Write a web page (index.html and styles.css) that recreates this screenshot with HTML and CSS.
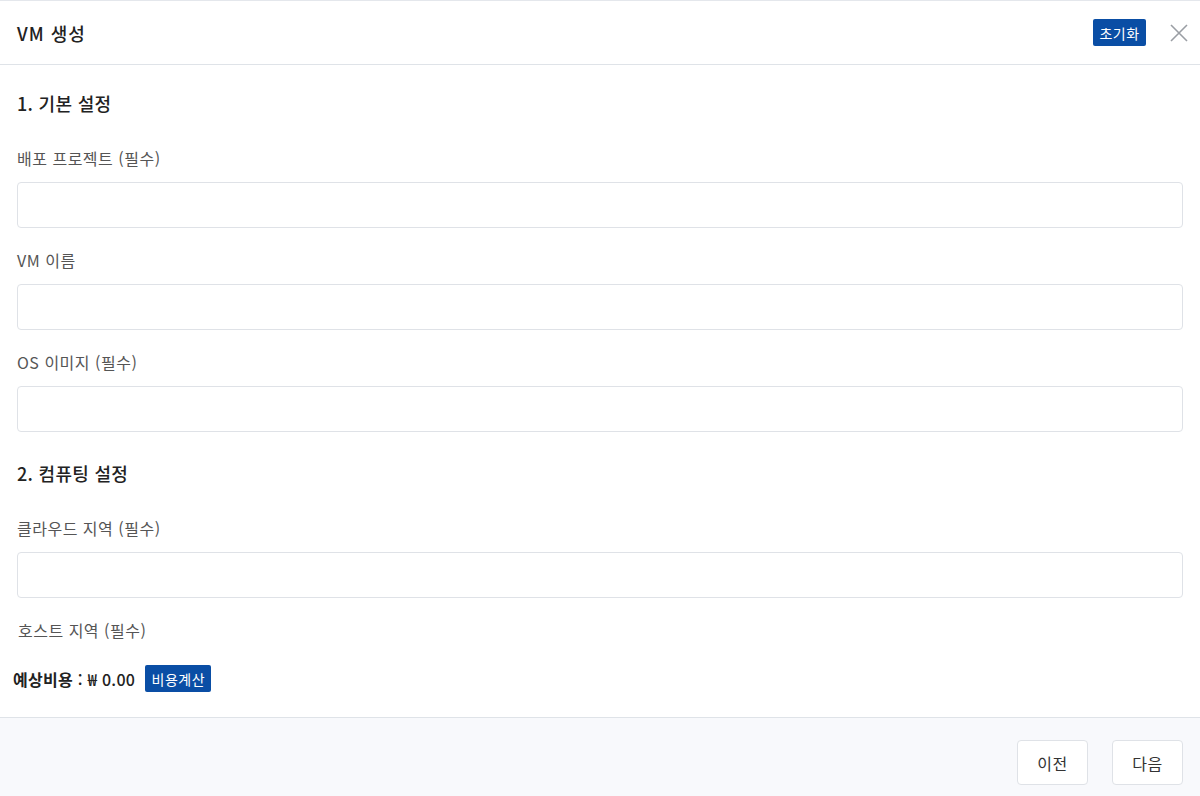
FILE: index.html
```html
<!DOCTYPE html>
<html lang="ko">
<head>
<meta charset="utf-8">
<title>VM 생성</title>
<link rel="stylesheet" href="styles.css">
</head>
<body>
<div class="modal">
  <div class="modal-header">
    <h1 class="modal-title">VM 생성</h1>
    <div class="header-actions">
      <button class="btn-primary btn-reset">초기화</button>
      <button class="btn-close" aria-label="닫기">
        <svg width="18" height="18" viewBox="0 0 18 18"><path d="M1 1 L17 17 M17 1 L1 17" stroke="#9a9ea4" stroke-width="1.6" fill="none"/></svg>
      </button>
    </div>
  </div>
  <div class="modal-body">
    <h2 class="section-title">1. 기본 설정</h2>
    <div class="field">
      <label class="field-label">배포 프로젝트 (필수)</label>
      <div class="field-input"></div>
    </div>
    <div class="field">
      <label class="field-label">VM 이름</label>
      <div class="field-input"></div>
    </div>
    <div class="field">
      <label class="field-label">OS 이미지 (필수)</label>
      <div class="field-input"></div>
    </div>
    <h2 class="section-title second">2. 컴퓨팅 설정</h2>
    <div class="field">
      <label class="field-label">클라우드 지역 (필수)</label>
      <div class="field-input"></div>
    </div>
    <div class="field">
      <label class="field-label host">호스트 지역 (필수)</label>
    </div>
    <div class="cost-row">
      <span class="cost-text"><strong>예상비용</strong> : ₩ 0.00</span>
      <button class="btn-primary btn-calc">비용계산</button>
    </div>
  </div>
  <div class="modal-footer">
    <button class="btn-outline">이전</button>
    <button class="btn-outline">다음</button>
  </div>
</div>
</body>
</html>
```
FILE: styles.css
```css
* { box-sizing: border-box; }
html, body {
  margin: 0;
  padding: 0;
  background: #ffffff;
}
body {
  font-family: "Noto Sans CJK KR", "Noto Sans", sans-serif;
  color: #222;
}
.modal {
  width: 1200px;
  height: 796px;
  display: flex;
  flex-direction: column;
  border-top: 1px solid #e4e7ec;
}
.modal-header {
  height: 65px;
  display: flex;
  align-items: center;
  justify-content: space-between;
  padding: 0 12px 0 17px;
  border-bottom: 1px solid #dfe3e8;
}
.modal-title {
  margin: 0;
  font-size: 18px;
  font-weight: 500;
  letter-spacing: 1px;
  color: #222;
  line-height: 24px;
}
.header-actions {
  display: flex;
  align-items: center;
  gap: 24px;
}
.btn-primary {
  background: #0a4ea5;
  color: #fff;
  border: none;
  border-radius: 2px;
  font-family: inherit;
  font-size: 14px;
  line-height: 18px;
  letter-spacing: 0.5px;
  height: 27px;
  cursor: pointer;
}
.btn-reset { width: 53px; padding: 0; }
.btn-close {
  background: none;
  border: none;
  padding: 0;
  width: 18px;
  height: 18px;
  display: flex;
  margin-top: 1px;
  cursor: pointer;
}
.modal-body {
  flex: 1;
  padding: 26px 17px 25px 17px;
  display: flex;
  flex-direction: column;
}
.section-title {
  margin: 0;
  font-size: 18px;
  font-weight: 500;
  line-height: 24px;
  letter-spacing: 0.3px;
  color: #222;
}
.section-title.second { margin-top: 29px; }
.field {
  margin-top: 22px;
  display: flex;
  flex-direction: column;
}
.section-title + .field { margin-top: 33px; }
.field-label {
  font-size: 16px;
  line-height: 20px;
  letter-spacing: 0.5px;
  color: #555;
  margin-bottom: 14px;
}
.field-label.host { margin-bottom: 0; padding-left: 1px; }
.field-input {
  height: 46px;
  border: 1px solid #dfe2e7;
  border-radius: 4px;
  background: #fff;
}
.cost-row {
  margin-top: 25px;
  margin-left: -4px;
  display: flex;
  align-items: center;
  gap: 10px;
}
.cost-text {
  font-size: 16px;
  font-weight: 500;
  letter-spacing: 0.3px;
  color: #222;
  line-height: 20px;
}
.cost-text strong { font-weight: 700; }
.btn-calc { width: 66px; padding: 0; }
.modal-footer {
  height: 79px;
  border-top: 1px solid #dfe3e8;
  background: #f8f9fc;
  display: flex;
  justify-content: flex-end;
  align-items: flex-start;
  padding: 22px 17px 0 0;
  gap: 24px;
}
.btn-outline {
  width: 71px;
  height: 45px;
  background: #fff;
  border: 1px solid #dfe2e7;
  border-radius: 4px;
  font-family: inherit;
  font-size: 16px;
  letter-spacing: 0.5px;
  color: #333;
  cursor: pointer;
}
```
